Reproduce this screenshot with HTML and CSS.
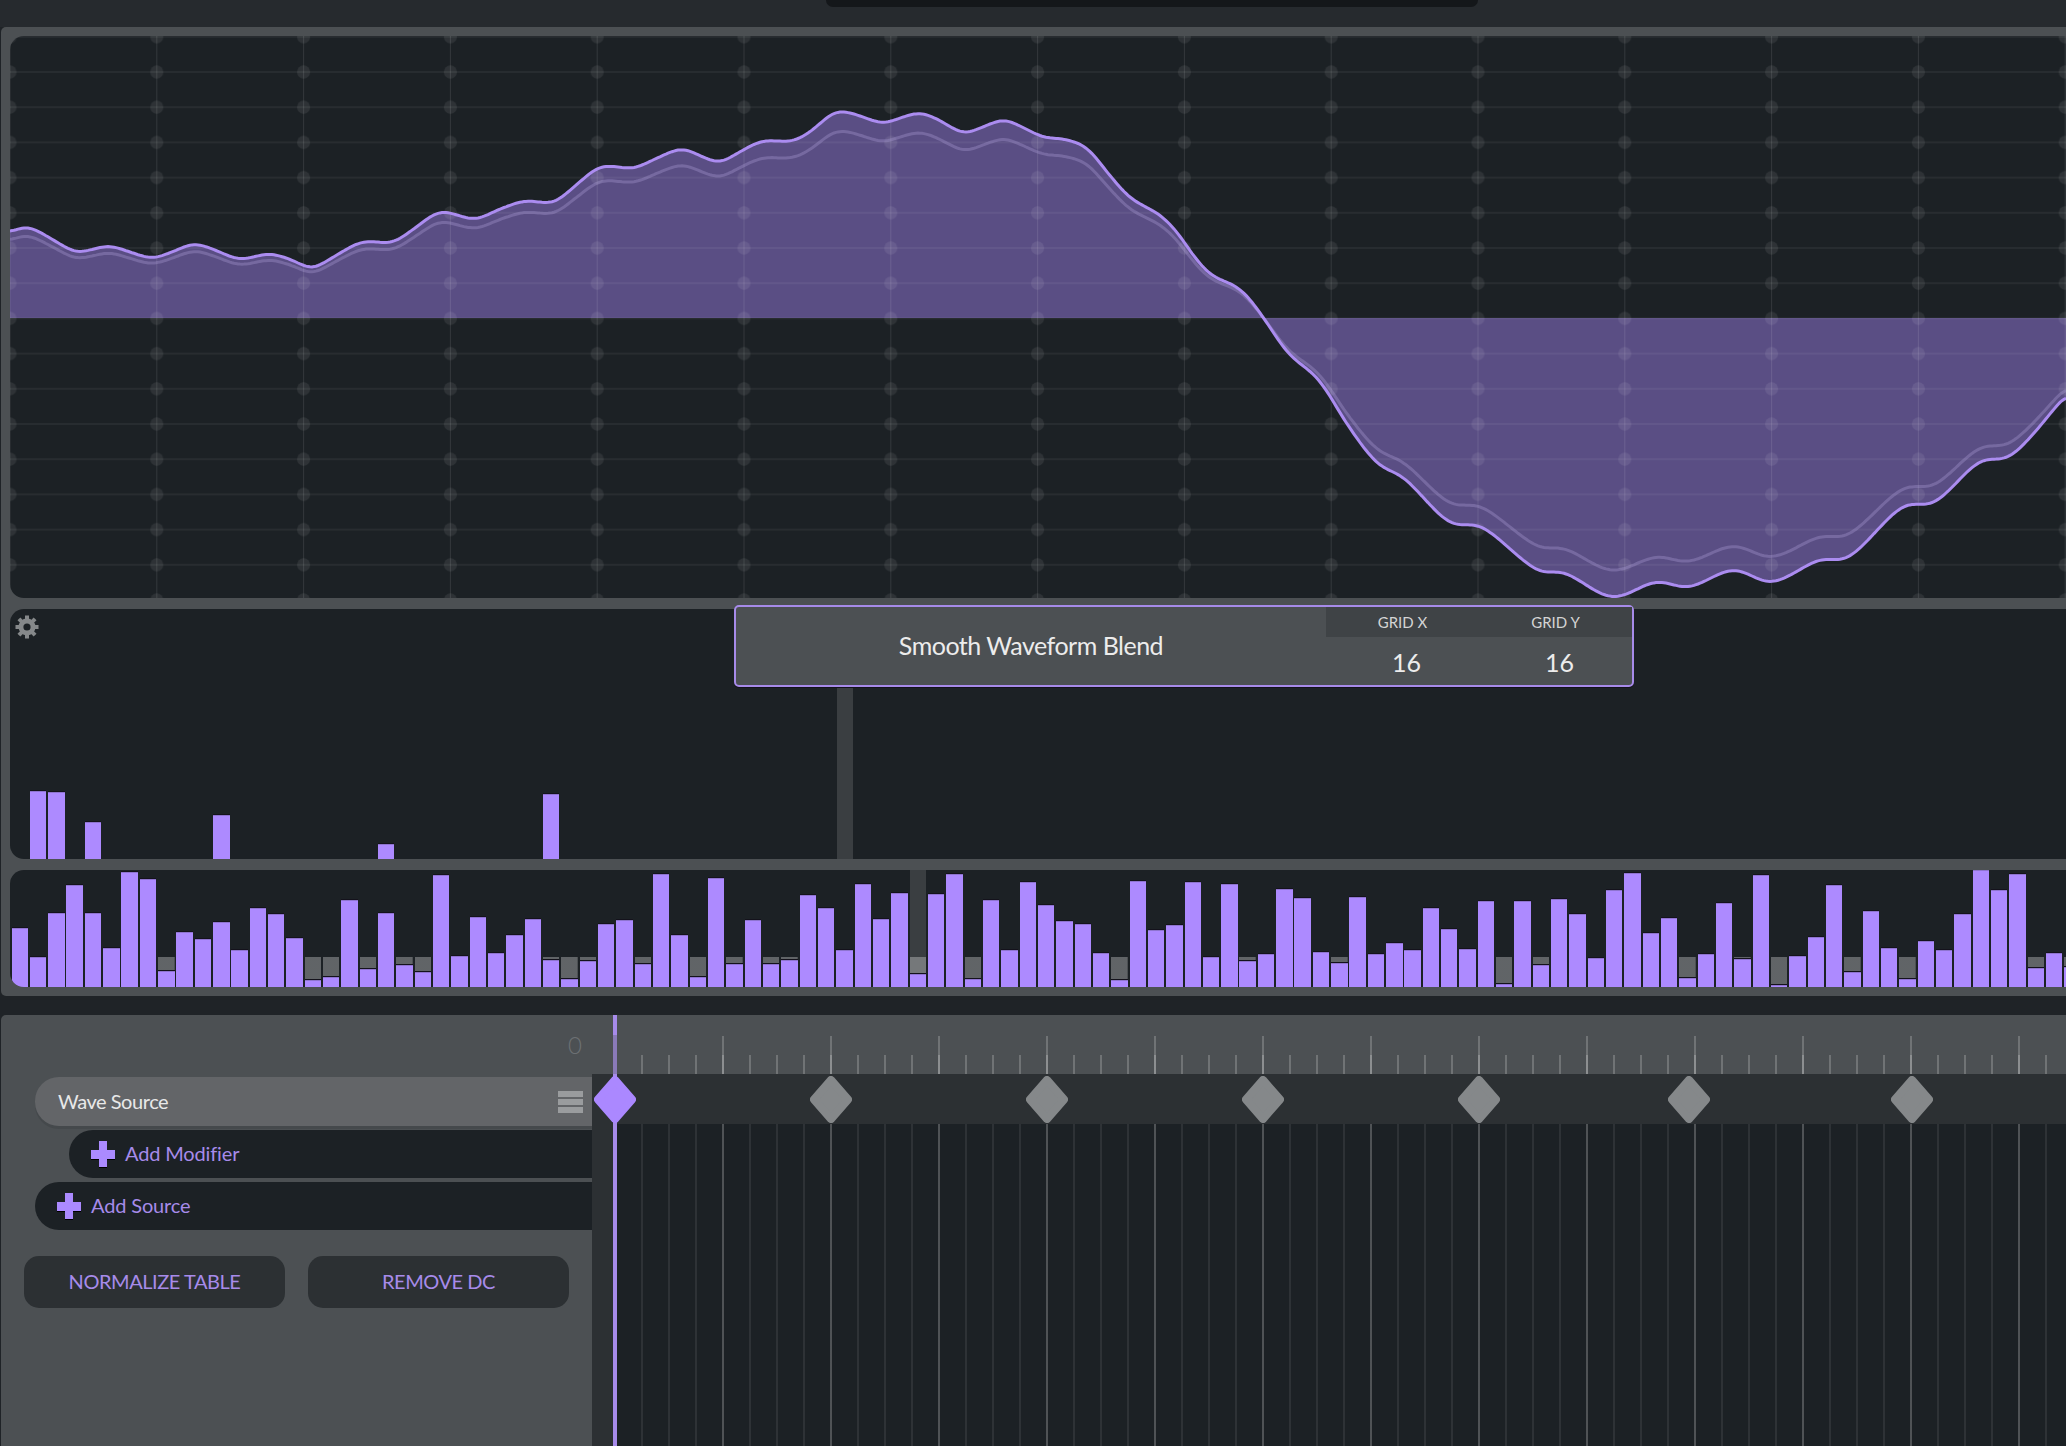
FILE: index.html
```html
<!DOCTYPE html>
<html lang="en">
<head>
    <meta charset="UTF-8">
    <title>Wavetable Editor</title>
    <link rel="stylesheet" href="styles.css">
</head>
<body>

    <div class="top-bar">
        <div class="top-pill"></div>
    </div>

    <div class="editor">
        <div class="wave-view">
            <svg class="wave-svg" width="2056" height="562" viewBox="10 36 2056 562">
                <defs>
                    <pattern id="grid" x="-63.4" y="19.2" width="146.8" height="35.2" patternUnits="userSpaceOnUse">
                        <line class="grid-line" x1="73.4" y1="0" x2="73.4" y2="35.2"></line>
                        <line class="grid-line" x1="0" y1="17.6" x2="146.8" y2="17.6"></line>
                        <circle class="grid-dot" cx="73.4" cy="17.6" r="6.5"></circle>
                    </pattern>
                </defs>
                <path id="wave-fill" class="wave-fill"></path>
                <rect x="10" y="36" width="2056" height="562" fill="url(#grid)"></rect>
                <path id="wave-ghost" class="wave-ghost"></path>
                <path id="wave-line" class="wave-line"></path>
            </svg>
        </div>

        <div class="spectrum">
            <svg class="gear" width="24" height="24" viewBox="-12 -12 24 24">
                <g class="gear-teeth">
                    <line x1="0" y1="-11.5" x2="0" y2="11.5"></line>
                    <line x1="-11.5" y1="0" x2="11.5" y2="0"></line>
                    <line x1="-8.1" y1="-8.1" x2="8.1" y2="8.1"></line>
                    <line x1="-8.1" y1="8.1" x2="8.1" y2="-8.1"></line>
                </g>
                <circle class="gear-body" r="8.5"></circle>
                <circle class="gear-hole" r="3.6"></circle>
            </svg>
            <div class="splitter splitter-top"></div>
            <div class="bars" id="bars-top"></div>
        </div>

        <div class="spectrum spectrum-low">
            <div class="splitter splitter-low"></div>
            <div class="bars" id="bars-low"></div>
        </div>

        <div class="blend-tip">
            <div class="blend-name">Smooth Waveform Blend</div>
            <div class="grid-fields">
                <div class="grid-labels">
                    <span>GRID X</span>
                    <span>GRID Y</span>
                </div>
                <div class="grid-values">
                    <span>16</span>
                    <span>16</span>
                </div>
            </div>
        </div>
    </div>

    <div class="bottom-panel">
        <div class="layers">
            <div class="frame-number">0</div>

            <div class="layer-row layer-source">
                <span class="layer-label">Wave Source</span>
                <div class="grip"><i></i><i></i><i></i></div>
            </div>
            <div class="layer-row layer-add layer-nested">
                <span class="plus"></span>
                <span class="layer-label">Add Modifier</span>
            </div>
            <div class="layer-row layer-add">
                <span class="plus"></span>
                <span class="layer-label">Add Source</span>
            </div>

            <div class="actions">
                <button class="action-btn">NORMALIZE TABLE</button>
                <button class="action-btn">REMOVE DC</button>
            </div>
        </div>

        <div class="timeline" id="timeline">
            <div class="ruler"></div>
            <div class="lane"></div>
            <div class="track"></div>
            <div class="playhead"></div>
        </div>
    </div>

    <script src="app.js"></script>
</body>
</html>
```

FILE: styles.css
```css
* {
    box-sizing: border-box;
}
body {
    margin: 0;
    height: 1446px;
    overflow: hidden;
    background-color: #1f2327;
    font-family: Lato, "Open Sans", sans-serif;
}
.top-bar {
    height: 27px;
    padding-left: 826px;
    background-color: #262a2e;
}
.top-pill {
    width: 652px;
    height: 7px;
    background-color: #14171a;
    border-radius: 0 0 10px 10px;
}

/* main editor frame */
.editor {
    position: relative;
    height: 969px;
    margin-left: 1px;
    padding: 9px 0 9px 9px;
    display: flex;
    flex-direction: column;
    gap: 11px;
    background-color: #4c5053;
    border-radius: 5px 0 0 5px;
}
.wave-view {
    height: 562px;
    flex: none;
    overflow: hidden;
    background-color: #1c2125;
    border-radius: 14px 0 0 14px;
}
.wave-svg {
    display: block;
}
.wave-fill {
    fill: rgba(171, 136, 255, 0.44);
}
.grid-line {
    stroke: rgba(255, 255, 255, 0.1);
    stroke-width: 1;
}
.grid-dot {
    fill: rgba(255, 255, 255, 0.08);
}
.wave-ghost {
    fill: none;
    stroke: rgba(190, 175, 235, 0.28);
    stroke-width: 3;
}
.wave-line {
    fill: none;
    stroke: #ab8cf0;
    stroke-width: 3;
}

.spectrum {
    position: relative;
    height: 250px;
    flex: none;
    overflow: hidden;
    background-color: #1c2125;
    border-radius: 14px 0 0 14px;
}
.spectrum-low {
    height: 117px;
}
.gear {
    position: absolute;
    left: 5px;
    top: 6px;
}
.gear-teeth line {
    stroke: #85888a;
    stroke-width: 4;
}
.gear-body {
    fill: #85888a;
}
.gear-hole {
    fill: #1c2125;
}
.splitter {
    position: absolute;
    top: 0;
    bottom: 0;
    background-color: #3a3e41;
}
.splitter-top {
    left: 827px;
    width: 16px;
}
.splitter-low {
    left: 900px;
    width: 16px;
}
.bars {
    position: relative;
    height: 100%;
    padding-left: 1.5px;
    display: flex;
    align-items: flex-end;
    gap: 1.95px;
}
.bin {
    flex: none;
    width: 16.4px;
    height: 100%;
    display: flex;
    align-items: flex-end;
}
.spectrum-low .bin {
    background: linear-gradient(rgba(255, 255, 255, 0.3), rgba(255, 255, 255, 0.3)) bottom / 100% 30px no-repeat;
}
.bar {
    width: 100%;
    background-color: #ad8aff;
    border-top: 1px solid #8e74cf;
    box-shadow: 0 -1px 0 #14121c;
}

/* floating blend mode box */
.blend-tip {
    position: absolute;
    left: 733px;
    top: 578px;
    width: 900px;
    height: 82px;
    display: flex;
    background-color: #4c5053;
    border: 2px solid #a78bea;
    border-radius: 5px;
    box-shadow: 0 1px 0 #14121c;
}
.blend-name {
    flex: 1;
    display: flex;
    align-items: center;
    justify-content: center;
    padding-bottom: 2px;
    font-size: 25px;
    letter-spacing: -0.5px;
    color: #ececec;
}
.grid-fields {
    width: 306px;
    display: flex;
    flex-direction: column;
}
.grid-labels,
.grid-values {
    display: grid;
    grid-template-columns: 153px 153px;
    text-align: center;
}
.grid-labels {
    height: 30px;
    align-items: center;
    font-size: 15px;
    color: #d4d4d4;
    background-color: #3f4346;
}
.grid-values {
    flex: 1;
    padding: 10px 0 0 4px;
    font-size: 25px;
    color: #ececec;
}

/* bottom part */
.bottom-panel {
    height: 431px;
    margin-top: 19px;
    margin-left: 1px;
    display: flex;
    background-color: #4c5053;
    border-radius: 5px 0 0 0;
}
.layers {
    width: 591px;
    flex: none;
    display: flex;
    flex-direction: column;
}
.frame-number {
    height: 62px;
    padding: 15px 10px 0 0;
    text-align: right;
    font-size: 24px;
    font-weight: 300;
    color: #6c7073;
}
.layer-row {
    height: 48px;
    flex: none;
    margin-left: 34px;
    margin-bottom: 4px;
    display: flex;
    align-items: center;
    font-size: 20px;
    border-radius: 24px 0 0 24px;
}
.layer-source {
    height: 49px;
    padding: 0 9px 0 23px;
    justify-content: space-between;
    letter-spacing: -0.45px;
    color: #e8e8e8;
    background-color: #636568;
    box-shadow: 0 3px 0 #45494c;
}
.layer-add {
    padding-left: 22px;
    gap: 10px;
    letter-spacing: -0.15px;
    color: #a78bea;
    background-color: #1c2125;
}
.layer-label {
    margin-bottom: 2px;
}
.layer-nested {
    margin-left: 68px;
}
.grip {
    width: 25px;
    display: flex;
    flex-direction: column;
    gap: 2px;
}
.grip i {
    height: 6px;
    background-color: #9a9c9e;
}
.plus {
    width: 24px;
    height: 26px;
    flex: none;
    background:
        linear-gradient(#ab8aff, #ab8aff) center / 100% 9px no-repeat,
        linear-gradient(#ab8aff, #ab8aff) center / 8px 100% no-repeat;
    filter: drop-shadow(0 1px 0 #000);
}
.actions {
    margin-top: 22px;
    padding-left: 23px;
    display: flex;
    gap: 23px;
}
.action-btn {
    width: 261px;
    height: 52px;
    padding-bottom: 3px;
    border: none;
    border-radius: 15px;
    background-color: #2c3033;
    color: #a78bea;
    font-family: inherit;
    font-size: 20px;
    letter-spacing: -0.45px;
}

/* timeline */
.timeline {
    position: relative;
    flex: 1;
    display: flex;
    flex-direction: column;
    overflow: hidden;
}
.ruler {
    height: 59px;
    flex: none;
    background:
        repeating-linear-gradient(90deg, transparent 0 22px, rgba(255, 255, 255, 0.2) 22px 24px, transparent 24px 108px) left bottom / 100% 38px no-repeat,
        repeating-linear-gradient(90deg, transparent 0 22px, rgba(255, 255, 255, 0.2) 22px 24px, transparent 24px 27px) left bottom / 100% 19px no-repeat;
}
.lane {
    height: 50px;
    flex: none;
    background-color: #2c3033;
}
.track {
    flex: 1;
    background:
        repeating-linear-gradient(90deg, transparent 0 22px, rgba(255, 255, 255, 0.16) 22px 24px, transparent 24px 108px),
        repeating-linear-gradient(90deg, transparent 0 22px, rgba(255, 255, 255, 0.08) 22px 24px, transparent 24px 27px),
        linear-gradient(90deg, #2c3033 23px, #1c2125 23px);
}
.playhead {
    position: absolute;
    left: 21px;
    top: 0;
    bottom: 0;
    width: 4px;
    background: linear-gradient(#a78bea 20px, #8a7ab8 20px 59px, #a78bea 59px);
}
.key {
    position: absolute;
    top: 61px;
}
.key svg {
    display: block;
}
.key path {
    fill: #85888a;
    stroke: #85888a;
    stroke-width: 8;
    stroke-linejoin: round;
}
.key-active path {
    fill: #ab88ff;
    stroke: #ab88ff;
}
```

FILE: app.js
```js
// waveform outline, in page pixels
const wavePoints = [
    [10, 232], [27, 227], [45, 235], [60, 244], [76, 252], [90, 250], [109, 246], [130, 252],
    [152, 258], [172, 252], [194, 244], [215, 250], [239, 259], [270, 254], [292, 260], [312, 268],
    [335, 256], [362, 242], [393, 242], [415, 228], [440, 212], [475, 219], [500, 209], [525, 201],
    [554, 202], [575, 186], [600, 167], [634, 168], [655, 159], [682, 149], [703, 157], [720, 162],
    [743, 150], [763, 141], [792, 141], [810, 132], [833, 113], [847, 112], [863, 117], [883, 123],
    [903, 117], [920, 113], [937, 119], [960, 132], [970, 132], [1003, 120], [1020, 126], [1043, 137],
    [1063, 139], [1087, 148], [1107, 172], [1127, 195], [1140, 204], [1160, 215], [1177, 232],
    [1193, 255], [1210, 274], [1237, 287], [1248, 297], [1263, 317], [1288, 353], [1319, 380],
    [1349, 427], [1377, 463], [1404, 478], [1449, 522], [1482, 527], [1537, 570], [1565, 573],
    [1612, 597], [1656, 582], [1689, 587], [1733, 570], [1772, 582], [1819, 560], [1849, 557],
    [1902, 507], [1935, 502], [1979, 462], [2012, 455], [2066, 395]
];
const WAVE_CENTER = 318;

// bar heights of the lower spectrum
const lowBars = [
    59, 30, 74, 102, 74, 39, 115, 108, 16, 55, 48, 65, 37, 79, 73, 49, 7, 10, 87, 18,
    74, 22, 15, 112, 31, 70, 34, 52, 68, 27, 8, 26, 63, 67, 23, 113, 52, 10, 109, 23,
    67, 23, 27, 92, 79, 37, 103, 68, 94, 13, 93, 113, 8, 87, 37, 105, 82, 66, 63, 34,
    7, 106, 57, 62, 105, 30, 103, 26, 33, 98, 89, 35, 24, 90, 33, 44, 37, 79, 58, 38,
    86, 3, 86, 22, 88, 73, 29, 97, 114, 54, 69, 9, 33, 84, 28, 112, 2, 31, 50, 102,
    15, 76, 39, 8, 46, 37, 73, 117, 97, 113, 19, 34, 20
];

// the upper spectrum only has a few harmonics
const topBars = { 1: 68, 2: 67, 4: 37, 11: 44, 20: 15, 29: 65 };

// x of each key frame inside the timeline
const keyFrames = [23, 239, 455, 671, 887, 1097, 1320];

// y of the outline at every 2px, with the corners between the points blurred away
function sampleWave(points) {
    let ys = [];
    let seg = 0;
    for (let x = points[0][0]; x <= 2066; x += 2) {
        while (points[seg + 1][0] < x) seg++;
        const a = points[Math.max(seg - 1, 0)];
        const b = points[seg];
        const c = points[seg + 1];
        const d = points[Math.min(seg + 2, points.length - 1)];
        const t = (x - b[0]) / (c[0] - b[0]);
        const m1 = (c[1] - a[1]) / (c[0] - a[0]) * (c[0] - b[0]);
        const m2 = (d[1] - b[1]) / (d[0] - b[0]) * (c[0] - b[0]);
        // hermite interpolation
        ys.push((2 * t ** 3 - 3 * t ** 2 + 1) * b[1] + (t ** 3 - 2 * t ** 2 + t) * m1 +
            (-2 * t ** 3 + 3 * t ** 2) * c[1] + (t ** 3 - t ** 2) * m2);
    }
    for (let pass = 0; pass < 2; pass++) {
        ys = ys.map((_, i) => {
            let sum = 0;
            for (let j = -3; j <= 3; j++) {
                sum += ys[Math.min(Math.max(i + j, 0), ys.length - 1)];
            }
            return sum / 7;
        });
    }
    return ys;
}

function wavePath(ys, scale) {
    return ys.map((y, i) => {
        const value = WAVE_CENTER + (y - WAVE_CENTER) * scale;
        return (i ? 'L' : 'M') + (10 + i * 2) + ' ' + value.toFixed(1);
    }).join('');
}

function addBars(container, count, heightAt) {
    for (let i = 0; i < count; i++) {
        const bin = document.createElement('div');
        bin.className = 'bin';
        const height = heightAt(i);
        if (height) {
            const bar = document.createElement('div');
            bar.className = 'bar';
            bar.style.height = height + 'px';
            bin.appendChild(bar);
        }
        container.appendChild(bin);
    }
}

function addKey(timeline, x, active) {
    const key = document.createElement('div');
    key.className = active ? 'key key-active' : 'key';
    key.style.left = (x - 21) + 'px';
    key.innerHTML = '<svg width="42" height="47" viewBox="0 0 42 47"><path d="M21 4 L38 23.5 L21 43 L4 23.5Z"></path></svg>';
    timeline.appendChild(key);
}

const ys = sampleWave(wavePoints);
const line = wavePath(ys, 1);

document.getElementById('wave-fill').setAttribute('d', `${line}L2066 ${WAVE_CENTER}L10 ${WAVE_CENTER}Z`);
document.getElementById('wave-line').setAttribute('d', line);
document.getElementById('wave-ghost').setAttribute('d', wavePath(ys, 0.905));

addBars(document.getElementById('bars-top'), 30, i => topBars[i] || 0);
addBars(document.getElementById('bars-low'), lowBars.length, i => lowBars[i]);

const timeline = document.getElementById('timeline');
keyFrames.forEach((x, i) => addKey(timeline, x, i === 0));
```
